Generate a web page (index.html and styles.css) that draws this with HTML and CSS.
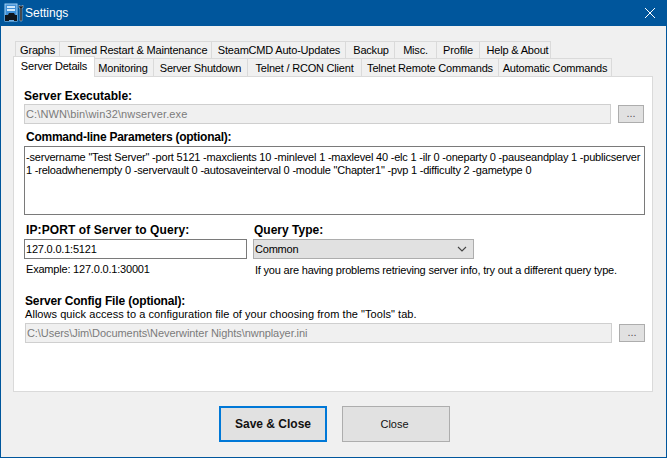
FILE: index.html
```html
<!DOCTYPE html>
<html lang="en">
<head>
<meta charset="utf-8">
<title>Settings</title>
<link rel="stylesheet" href="styles.css">
</head>
<body>
<div class="window">
  <header class="titlebar">
    <svg class="app-icon" width="20" height="20" viewBox="0 0 20 20">
      <rect x="1" y="1" width="12" height="17" fill="#3f8fd6" stroke="#9fd0f4" stroke-width="1"/>
      <rect x="3" y="3" width="8" height="2" fill="#cfe8fb"/>
      <rect x="3" y="6" width="8" height="2" fill="#cfe8fb"/>
      <path d="M1 12h3l1-2h5l1 2h2v6h-3v-1H5v1H1z" fill="#10151c"/>
      <path d="M15 2v3h1v13h2V5h1V2l-1 1h-2z" fill="#1a1d22" stroke="#c9d3da" stroke-width=".5"/>
    </svg>
    <span class="title">Settings</span>
    <svg class="close-x" width="12" height="12" viewBox="0 0 12 12"><path d="M1 1l10 10M11 1L1 11" stroke="#fff" stroke-width="1" fill="none"/></svg>
  </header>
  <main class="client">
    <div class="tabs">
      <div class="tab-row row-back">
        <span class="tab w-graphs">Graphs</span>
        <span class="tab w-timed">Timed Restart &amp; Maintenance</span>
        <span class="tab w-steam">SteamCMD Auto-Updates</span>
        <span class="tab w-backup">Backup</span>
        <span class="tab w-misc">Misc.</span>
        <span class="tab w-profile">Profile</span>
        <span class="tab w-help">Help &amp; About</span>
      </div>
      <div class="tab-row row-front">
        <span class="tab active w-details">Server Details</span>
        <span class="tab w-monitor">Monitoring</span>
        <span class="tab w-shutdown">Server Shutdown</span>
        <span class="tab w-rcon">Telnet / RCON Client</span>
        <span class="tab w-remote">Telnet Remote Commands</span>
        <span class="tab w-auto">Automatic Commands</span>
      </div>
    </div>
    <section class="panel">
      <label class="label l-exe">Server Executable:</label>
      <div class="path-row">
        <div class="field disabled exe-path">C:\NWN\bin\win32\nwserver.exe</div>
        <button class="browse">...</button>
      </div>
      <label class="label l-cmd">Command-line Parameters (optional):</label>
      <div class="params">-servername "Test Server" -port 5121 -maxclients 10 -minlevel 1 -maxlevel 40 -elc 1 -ilr 0 -oneparty 0 -pauseandplay 1 -publicserver<br>1 -reloadwhenempty 0 -servervault 0 -autosaveinterval 0 -module "Chapter1" -pvp 1 -difficulty 2 -gametype 0</div>
      <div class="query">
        <div class="q-left">
          <label class="label l-ip">IP:PORT of Server to Query:</label>
          <div class="field ip">127.0.0.1:5121</div>
          <p class="hint h-ex">Example: 127.0.0.1:30001</p>
        </div>
        <div class="q-right">
          <label class="label l-qt">Query Type:</label>
          <div class="select">
            <span>Common</span>
            <svg width="10" height="6" viewBox="0 0 10 6"><path d="M1 1l4 4 4-4" fill="none" stroke="#444" stroke-width="1.1"/></svg>
          </div>
          <p class="hint h-q">If you are having problems retrieving server info, try out a different query type.</p>
        </div>
      </div>
      <label class="label l-cfg">Server Config File (optional):</label>
      <p class="hint h-cfg">Allows quick access to a configuration file of your choosing from the "Tools" tab.</p>
      <div class="path-row cfg-row">
        <div class="field disabled cfg-path">C:\Users\Jim\Documents\Neverwinter Nights\nwnplayer.ini</div>
        <button class="browse">...</button>
      </div>
    </section>
    <footer class="actions">
      <button class="action primary">Save &amp; Close</button>
      <button class="action plain">Close</button>
    </footer>
  </main>
</div>
</body>
</html>
```
FILE: styles.css
```css
* { box-sizing: border-box; }
html, body { margin: 0; padding: 0; }
body {
  width: 667px;
  height: 458px;
  overflow: hidden;
  font-family: "Liberation Sans", Arial, sans-serif;
  font-size: 11px;
  letter-spacing: -0.2px;
  color: #000;
}
.window {
  width: 667px;
  height: 458px;
  display: flex;
  flex-direction: column;
  background: #f0f0f0;
  border: 1px solid #00569c;
  border-top: 0;
}
.titlebar {
  height: 26px;
  flex: none;
  background: #00569c;
  display: flex;
  align-items: center;
  padding: 0 10px 0 3px;
  color: #fff;
  letter-spacing: 0;
}
.app-icon { flex: none; }
.title { font-size: 12px; margin-left: 1px; flex: 1; }
.client { flex: 1; padding: 15px 14px 0 12px; display: flex; flex-direction: column; }
.tabs { height: 35px; flex: none; position: relative; z-index: 1; }
.tab-row { display: flex; height: 17px; }
.row-back { padding-left: 2px; height: 17px; }
.row-front { height: 18px; }
.tab {
  display: flex;
  align-items: center;
  justify-content: center;
  height: 100%;
  background: #f0f0f0;
  border: 1px solid #dadada;
  border-bottom: 0;
  border-left-width: 0;
  white-space: nowrap;
}
.row-back .tab:first-child { border-left-width: 1px; }
.tab.active {
  background: #fff;
  height: 21px;
  margin-top: -2px;
  border-left-width: 1px;
  padding-bottom: 3px;
  position: relative;
  z-index: 2;
}
.w-graphs { width: 45px; }
.w-timed { width: 152px; padding-left: 4px; }
.w-steam { width: 134px; padding-left: 1px; }
.w-backup { width: 49px; padding-left: 2px; }
.w-misc { width: 42px; }
.w-profile { width: 43px; }
.w-help { width: 71px; padding-left: 5px; }
.w-details { width: 82px; }
.w-monitor { width: 59px; padding-right: 2px; }
.w-shutdown { width: 94px; }
.w-rcon { width: 114px; }
.w-remote { width: 137px; }
.w-auto { width: 113px; }
.panel {
  width: 640px;
  height: 316px;
  flex: none;
  background: #fff;
  border: 1px solid #dadada;
  padding: 12px 8px 0 10px;
  display: flex;
  flex-direction: column;
}
.label { display: block; font-weight: bold; font-size: 12px; line-height: 13px; letter-spacing: 0; }
.l-exe { height: 15px; padding-top: 1px; }
.path-row { display: flex; align-items: center; }
.field {
  height: 20px;
  border: 1px solid #7a7a7a;
  background: #fff;
  padding-left: 1px;
  line-height: 18px;
  white-space: nowrap;
  font-size: 11px;
}
.disabled { width: 587px; flex: none; background: #f0f0f0; border: 1px solid #cfcfcf; color: #7b7b7b; }
.exe-path { letter-spacing: 0.13px; }
.cfg-path { letter-spacing: -0.07px; }
.browse {
  width: 26px;
  height: 18px;
  margin-left: 7px;
  padding: 0 0 3px;
  flex: none;
  background: #e1e1e1;
  border: 1px solid #adadad;
  font: 11px "Liberation Sans", Arial, sans-serif;
  color: #555;
}
.l-cmd { margin-top: 7px; height: 15px; padding-left: 2px; letter-spacing: -0.25px; }
.params {
  width: 621px;
  height: 69px;
  border: 1px solid #7a7a7a;
  padding: 4px 1px;
  line-height: 13px;
  font-size: 11px;
  white-space: nowrap;
}
.query { display: flex; margin-top: 9px; }
.q-left { width: 229px; flex: none; }
.q-right { flex: 1; }
.l-ip { height: 15px; padding-left: 2px; letter-spacing: 0.1px; }
.l-qt { height: 15px; padding-left: 1px; }
.ip { width: 223px; }
.hint { margin: 0; line-height: 13px; font-size: 11px; }
.h-ex { margin-top: 4px; padding-left: 2px; }
.select {
  width: 221px;
  height: 20px;
  background: #e1e1e1;
  border: 1px solid #adadad;
  display: flex;
  align-items: center;
  justify-content: space-between;
  padding: 0 6px 0 1px;
}
.h-q { margin-top: 5px; padding-left: 2px; white-space: nowrap; }
.l-cfg { margin-top: 18px; margin-left: 1px; height: 13px; letter-spacing: -0.15px; }
.h-cfg { margin-left: 1px; height: 14px; white-space: nowrap; letter-spacing: 0.05px; }
.cfg-row { margin-left: 1px; margin-top: 1px; }
.actions { display: flex; justify-content: center; gap: 15px; margin-top: 14px; padding-left: 4px; }
.action {
  width: 108px;
  height: 36px;
  background: #e1e1e1;
  border: 1px solid #adadad;
  font: 12px "Liberation Sans", Arial, sans-serif;
  color: #111;
  padding: 0;
}
.plain { font-size: 11px; padding-right: 3px; }
.primary { border: 2px solid #0078d7; font-weight: bold; }
```
